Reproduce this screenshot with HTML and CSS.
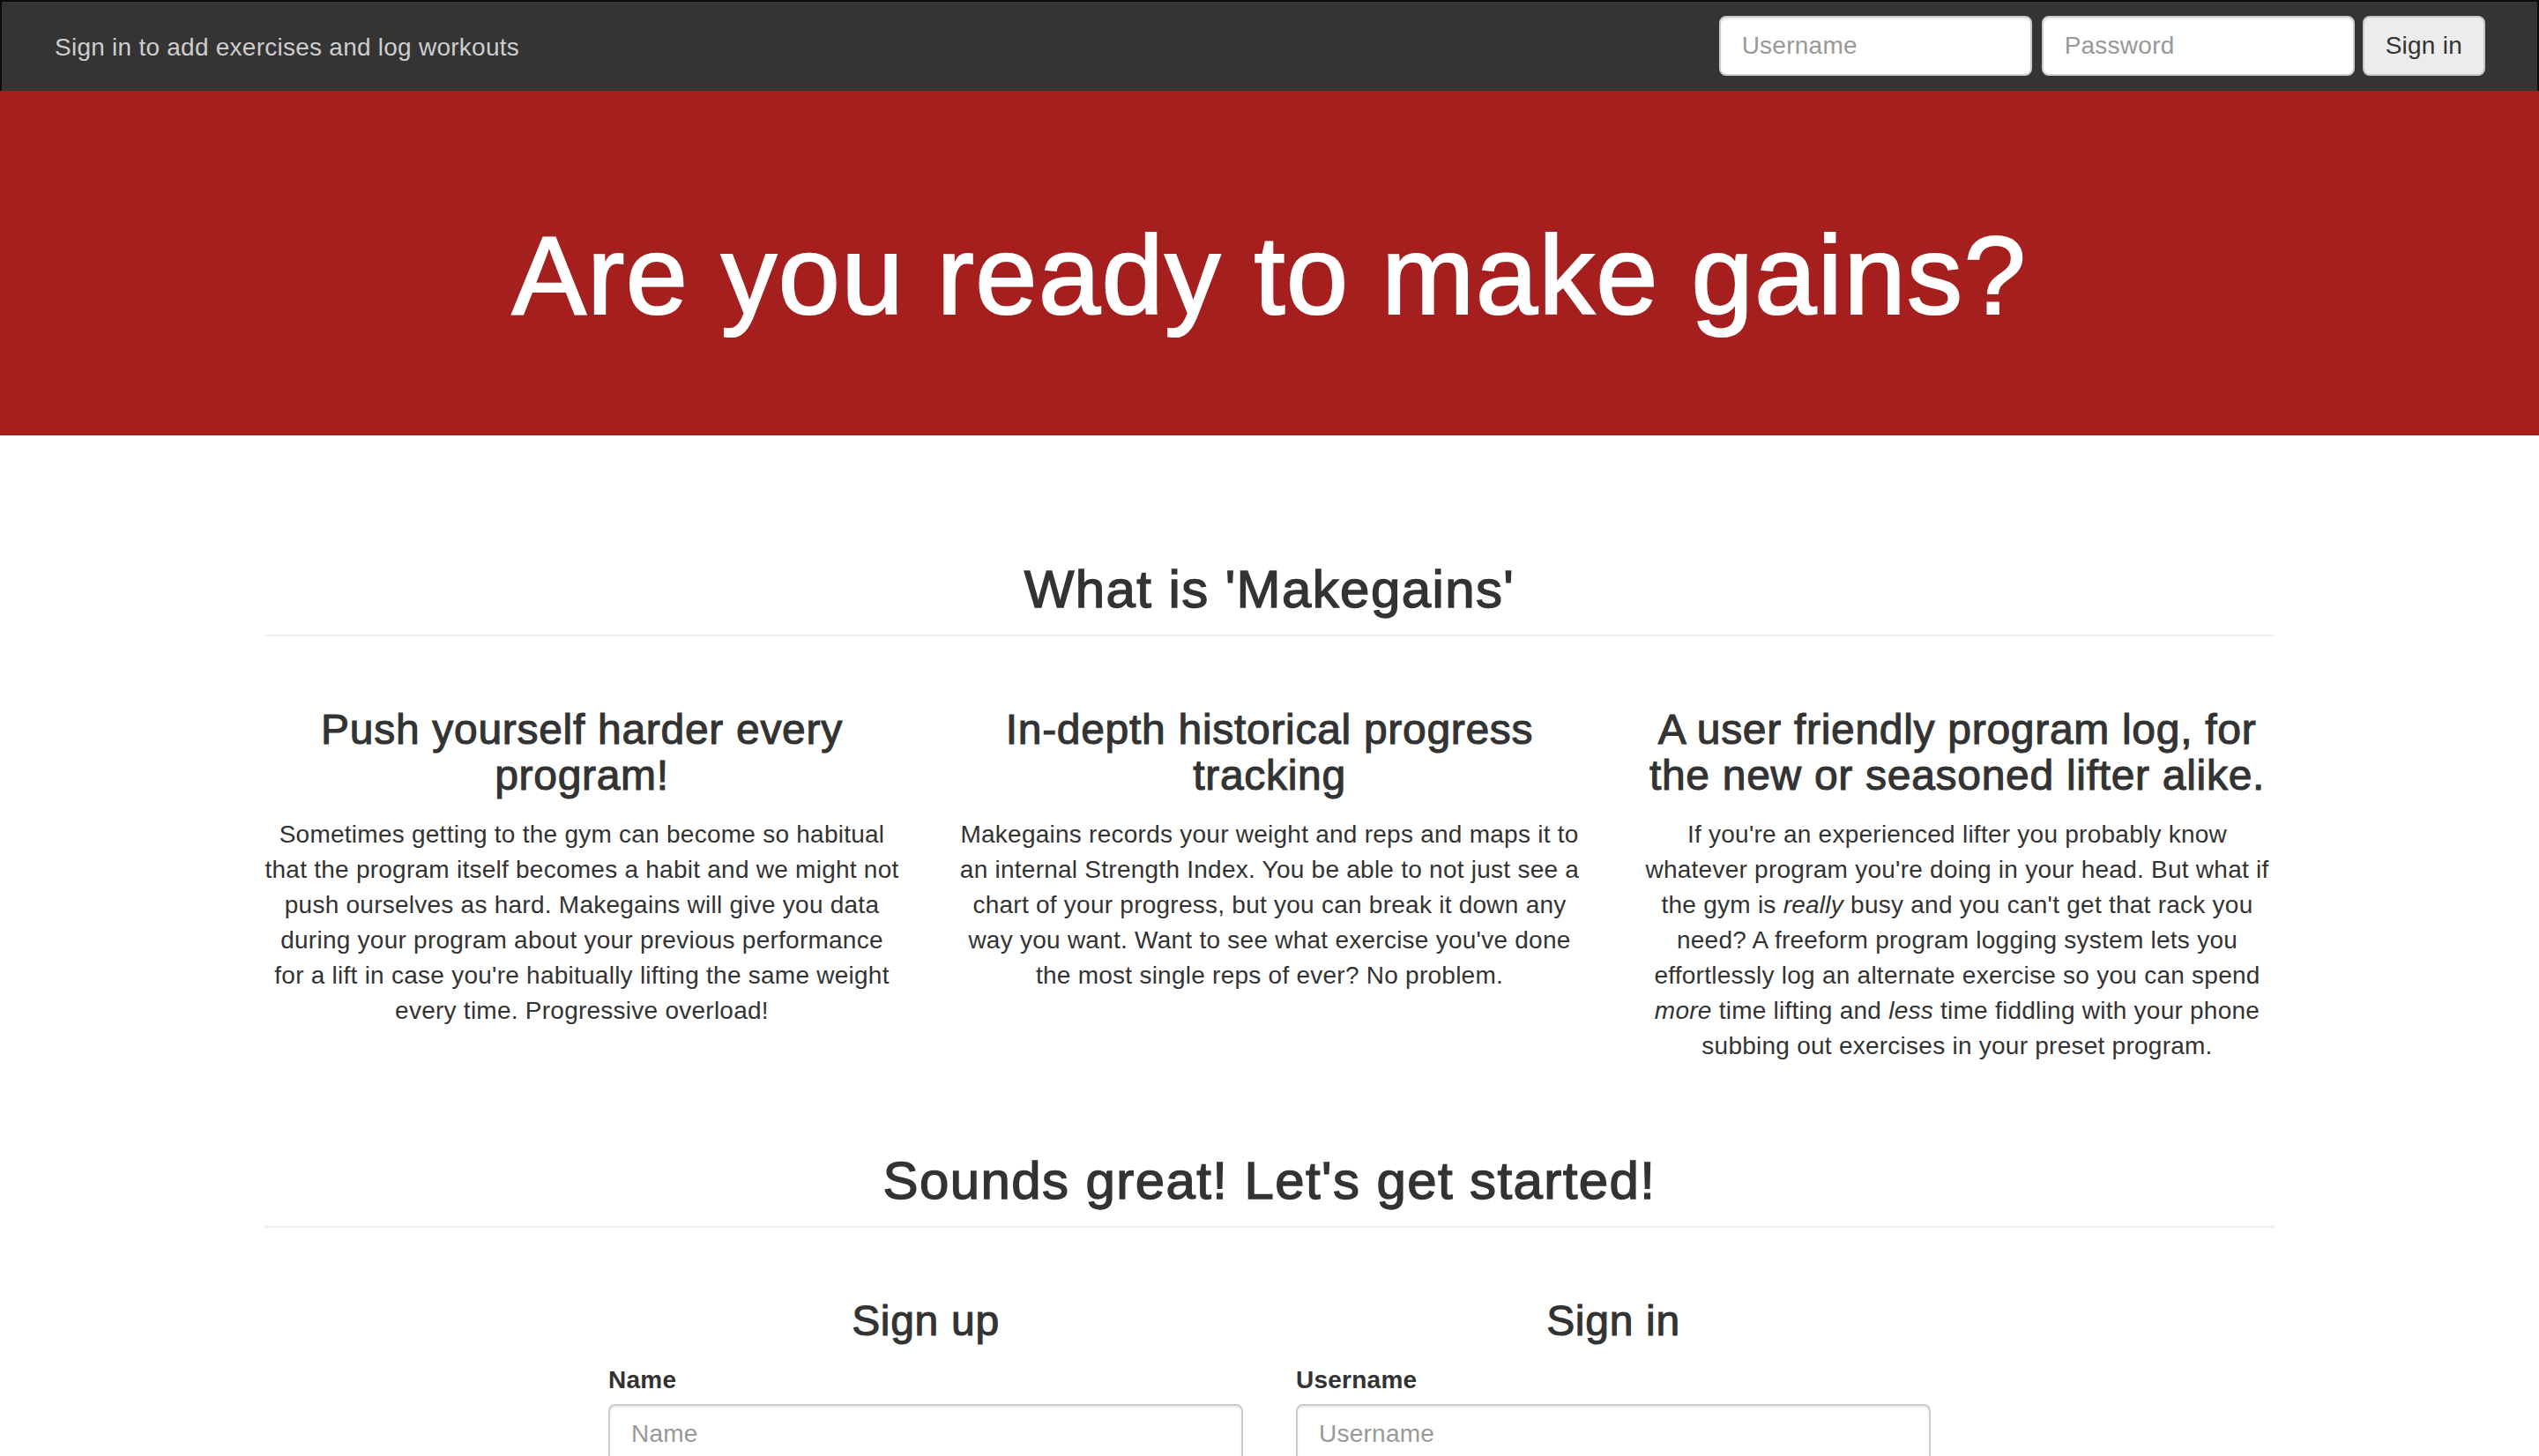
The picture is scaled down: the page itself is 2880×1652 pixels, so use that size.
FILE: index.html
```html
<!DOCTYPE html>
<html lang="en">
<head>
<meta charset="utf-8">
<title>Makegains</title>
<link rel="stylesheet" href="styles.css">
</head>
<body>
<nav class="navbar">
  <p class="navbar-text">Sign in to add exercises and log workouts</p>
  <form class="navbar-form">
    <input class="form-control nav-input" type="text" placeholder="Username">
    <input class="form-control nav-input" type="password" placeholder="Password">
    <button class="btn" type="button">Sign in</button>
  </form>
</nav>

<header class="hero">
  <h1>Are you ready to make gains?</h1>
</header>

<main class="container">
  <div class="page-header first">
    <h2>What is 'Makegains'</h2>
  </div>
  <div class="features">
    <div class="feature">
      <h3>Push yourself harder every program!</h3>
      <p>Sometimes getting to the gym can become so habitual that the program itself becomes a habit and we might not push ourselves as hard. Makegains will give you data during your program about your previous performance for a lift in case you're habitually lifting the same weight every time. Progressive overload!</p>
    </div>
    <div class="feature">
      <h3>In-depth historical progress tracking</h3>
      <p>Makegains records your weight and reps and maps it to an internal Strength Index. You be able to not just see a chart of your progress, but you can break it down any way you want. Want to see what exercise you've done the most single reps of ever? No problem.</p>
    </div>
    <div class="feature">
      <h3>A user friendly program log, for the new or seasoned lifter alike.</h3>
      <p>If you're an experienced lifter you probably know whatever program you're doing in your head. But what if the gym is <em>really</em> busy and you can't get that rack you need? A freeform program logging system lets you effortlessly log an alternate exercise so you can spend <em>more</em> time lifting and <em>less</em> time fiddling with your phone subbing out exercises in your preset program.</p>
    </div>
  </div>

  <div class="page-header">
    <h2>Sounds great! Let's get started!</h2>
  </div>
  <div class="auth">
    <form class="auth-col">
      <h3>Sign up</h3>
      <label class="field-label" for="su-name">Name</label>
      <input id="su-name" class="form-control" type="text" placeholder="Name">
    </form>
    <form class="auth-col">
      <h3>Sign in</h3>
      <label class="field-label" for="si-user">Username</label>
      <input id="si-user" class="form-control" type="text" placeholder="Username">
    </form>
  </div>
</main>
</body>
</html>
```
FILE: styles.css
```css
* { box-sizing: border-box; }

html, body {
  margin: 0;
  padding: 0;
  background: #fff;
}

body {
  font-family: "Liberation Sans", Arial, Helvetica, sans-serif;
  font-size: 28px;
  line-height: 40px;
  letter-spacing: 0.25px;
  color: #333;
}

h1, h2, h3 {
  font-weight: 500;
  line-height: 1.1;
  margin: 0;
}

/* navbar */
.navbar {
  display: flex;
  justify-content: space-between;
  align-items: flex-start;
  height: 103px;
  background: #343434;
  border: 2px solid #0a0a0a;
  border-bottom: 0;
  padding: 0 59px 0 28px;
}

.navbar-text {
  margin: 32px 0 0 32px;
  line-height: 40px;
  color: #cdcdcd;
}

.navbar-form {
  display: flex;
  gap: 11px;
  margin-top: 16px;
}

.form-control {
  display: block;
  height: 68px;
  padding: 12px 24px;
  font-family: inherit;
  font-size: 28px;
  line-height: 40px;
  letter-spacing: 0.25px;
  color: #555;
  background: #fff;
  border: 2px solid #ccc;
  border-radius: 8px;
  box-shadow: inset 0 2px 2px rgba(0, 0, 0, 0.075);
  outline: none;
}

.form-control::placeholder {
  color: #999;
}

.nav-input {
  width: 355px;
}

.btn {
  height: 68px;
  padding: 12px 24px;
  font-family: inherit;
  font-size: 28px;
  line-height: 40px;
  letter-spacing: 0.25px;
  color: #333;
  background: #ececec;
  border: 2px solid #c8c8c8;
  border-radius: 8px;
  margin-left: -2px;
}

/* hero */
.hero {
  background: #a51f1f;
  padding: 96px 30px;
  text-align: center;
}

.hero h1 {
  margin: 45px 0 15px;
  font-size: 126px;
  letter-spacing: 1.6px;
  -webkit-text-stroke: 2.2px #fff;
  color: #fff;
}

/* main */
.container {
  width: 2280px;
  margin: 0 auto;
}

.page-header {
  margin: 80px 0 40px;
  padding-bottom: 18px;
  border-bottom: 2px solid #eee;
  text-align: center;
}

.page-header.first {
  margin-top: 142px;
}

.page-header h2 {
  font-size: 60px;
  letter-spacing: 1.4px;
  -webkit-text-stroke: 1.4px #333;
}

.features {
  display: grid;
  grid-template-columns: repeat(3, 720px);
  column-gap: 60px;
  text-align: center;
}

.feature h3,
.auth-col h3 {
  font-size: 48px;
  margin: 40px 0 20px;
  letter-spacing: 0.7px;
  -webkit-text-stroke: 1.1px #333;
}

.feature p {
  margin: 0 0 20px;
}

.auth {
  display: grid;
  grid-template-columns: repeat(2, 720px);
  column-gap: 60px;
  padding-left: 390px;
}

.auth-col h3 {
  text-align: center;
}

.field-label {
  display: inline-block;
  margin-bottom: 7px;
  font-weight: bold;
}

.auth-col .form-control {
  width: 100%;
}
```
